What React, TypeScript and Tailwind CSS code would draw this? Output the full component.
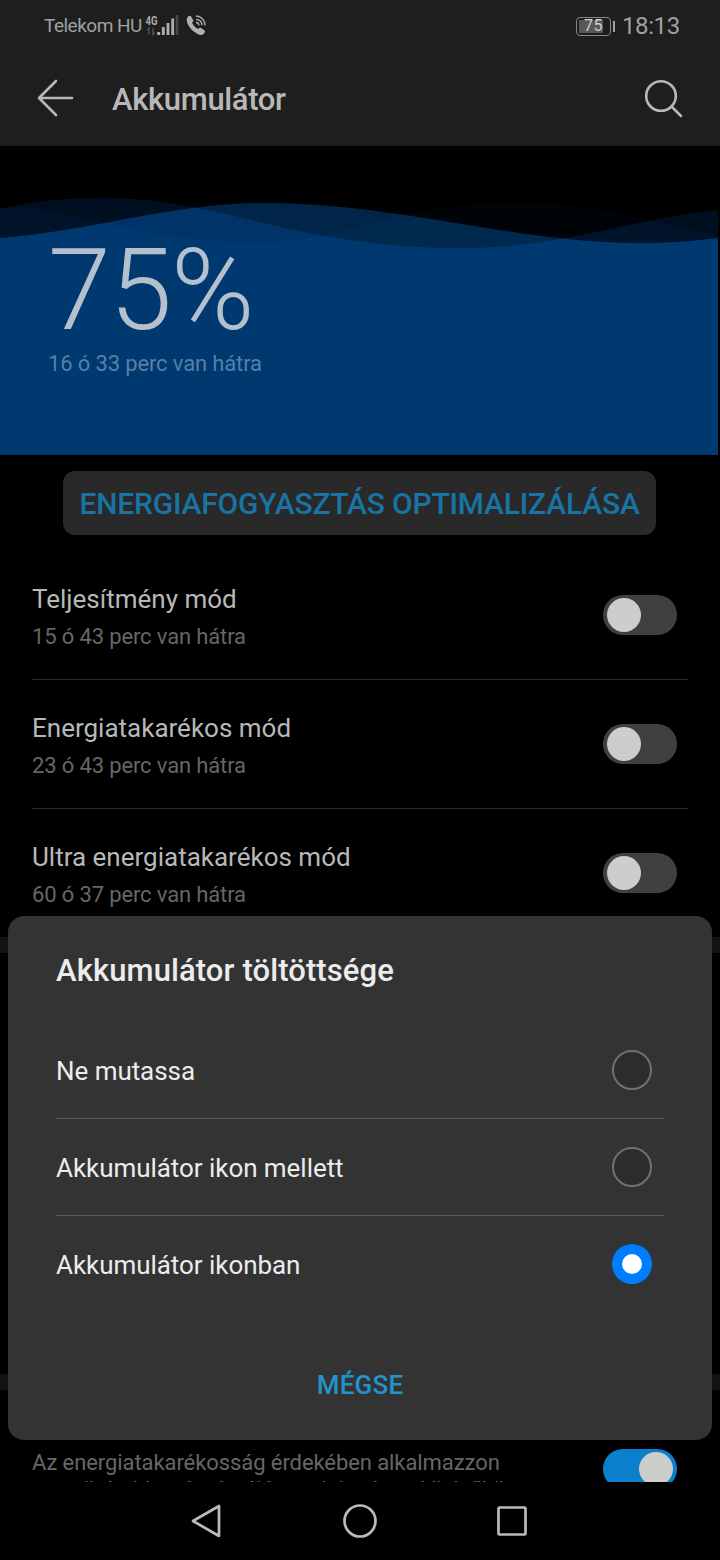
import { ReactNode } from 'react';

const MODES = [
  { title: 'Teljesítmény mód', left: '15 ó 43 perc van hátra' },
  { title: 'Energiatakarékos mód', left: '23 ó 43 perc van hátra' },
  { title: 'Ultra energiatakarékos mód', left: '60 ó 37 perc van hátra' },
];

const OPTIONS = ['Ne mutassa', 'Akkumulátor ikon mellett', 'Akkumulátor ikonban'];

function StatusBar() {
  return (
    <div className="flex h-[52px] items-center justify-between pl-11 pr-10 text-[#a0a0a0]">
      <div className="flex items-center">
        <span className="w-[98px] whitespace-nowrap text-[19px] tracking-[-0.5px]">Telekom HU</span>
        <svg width="36" height="26" viewBox="0 0 36 26" className="ml-[2px]">
          <text x="1.5" y="11.5" fontSize="13" fontWeight="700" textLength="12" lengthAdjust="spacingAndGlyphs" fill="#aaa">4G</text>
          <path d="M5 21.500v-6.500l-2 2M9 15v6.500l2-2" stroke="#505050" strokeWidth="1.5" fill="none" />
          <path d="M13.200 20.5h3" stroke="#b0b0b0" strokeWidth="3" />
          <path d="M19.300 22v-8M24 22v-12M28.700 22v-16.500" stroke="#b0b0b0" strokeWidth="2.800" />
          <path d="M33 22v-20" stroke="#484848" strokeWidth="2.500" />
        </svg>
        <svg width="22" height="22" viewBox="0 0 22 22" className="ml-[5px]">
          <path d="M2.500 2.200C4 .4 5.400.3 6.200 1.700L8 4.800c.6 1 .2 1.900-1 3 .9 2.500 3.400 5 6 6.200 1.200-1.200 2.100-1.500 3-.9l3.300 2.100c1.100.8.9 2-.8 3.700-1.900 1.800-5.400 1.300-10-2.600C3.500 12.200.2 5.300 2.500 2.200Z" fill="#b0b0b0" />
          <path d="M11 1c5 0 9 4 9 9.500M11 4.300c3.500 0 6 2.700 6 6M11 7.500c1.700 0 2.900 1.200 2.900 2.900" stroke="#b0b0b0" strokeWidth="1.300" fill="none" />
        </svg>
      </div>
      <div className="flex items-center">
        <div className="flex h-[19px] w-[35px] rounded-[4px] border border-[#858585] p-[2px]">
          <div className="flex h-full w-6 items-center bg-[#575757]">
            <span className="ml-[5px] text-[16px] leading-none tracking-[0.600px] text-[#d0d0d0]">75</span>
          </div>
        </div>
        <div className="ml-[2px] h-[11px] w-[2px] bg-[#a0a0a0]" />
        <span className="ml-[7px] w-[58px] whitespace-nowrap text-[24px] tracking-[-0.400px]">18:13</span>
      </div>
    </div>
  );
}

function TitleBar() {
  return (
    <div className="flex h-[94px] items-center pl-[37px] pr-9">
      <svg width="37" height="38" viewBox="0 0 37 38" className="-mt-[3px]" fill="none" stroke="#b8b8b8" strokeWidth="2.600" strokeLinecap="round" strokeLinejoin="round">
        <path d="M19 2L2 19l17 17M2 19h33" />
      </svg>
      <h1 className="ml-[38px] flex-1 pt-[2px] text-[31px] font-medium tracking-[-0.350px] text-[#b8b8b8]">Akkumulátor</h1>
      <svg width="40" height="40" viewBox="0 0 40 40" className="-mt-px" fill="none" stroke="#b8b8b8" strokeWidth="2.600" strokeLinecap="round">
        <circle cx="17" cy="17" r="14.800" />
        <path d="M28 28l9 9" />
      </svg>
    </div>
  );
}

// three translucent waves whose light adds up to the solid blue below
function Waves() {
  return (
    <svg width="718" height="309" viewBox="0 0 718 309" className="absolute left-0 top-0 isolate">
      <rect width="718" height="309" fill="#000" />
      <path className="mix-blend-plus-lighter" fill="#000408" d="M0 62C45 57 95 78 140 85C200 95 235 97 270 96C350 92 400 57 520 57C600 57 660 79 718 90V309H0Z" />
      <path className="mix-blend-plus-lighter" fill="#000f20" d="M0 63C35 54 80 51 115 52C225 55 300 102 460 102C565 102 630 73 718 64V309H0Z" />
      <path className="mix-blend-plus-lighter" fill="#002548" d="M0 92C95 85 170 57 265 57C400 57 520 98 640 97C670 97 695 95 718 92V309H0Z" />
    </svg>
  );
}

function Switch({ on = false }: { on?: boolean }) {
  return (
    <div className={`flex h-10 w-[74px] shrink-0 items-center rounded-full px-1 ${on ? 'justify-end bg-[#0a80cc]' : 'bg-[#404040]'}`}>
      <div className="size-[34px] rounded-full bg-[#cdcdcd]" />
    </div>
  );
}

function Row({ children, last }: { children: ReactNode; last: boolean }) {
  return (
    <div className={`mx-8 flex items-center justify-between pr-[11px] ${last ? 'h-32' : 'h-[129px] border-b border-[#2b2b2b]'}`}>
      {children}
    </div>
  );
}

function BatteryDialog() {
  return (
    <div className="absolute left-2 top-[916px] flex h-[524px] w-[704px] flex-col rounded-2xl bg-[#333] px-12">
      <h2 className="pt-[33px] text-[31px] font-medium leading-[44px] tracking-[0.100px] text-[#ececec]">Akkumulátor töltöttsége</h2>
      <div className="mt-[29px]">
        {OPTIONS.map((option, i) => (
          <div key={option} className={`flex items-center justify-between pr-3 ${i < 2 ? 'h-[97px] border-b border-[#5c5c5c]' : 'h-24'}`}>
            <span className="pt-[2px] text-[26px] tracking-[-0.050px] text-[#ececec]">{option}</span>
            {i === 2 ? (
              <span className="flex size-10 items-center justify-center rounded-full bg-[#007dff]">
                <span className="size-5 rounded-full bg-white" />
              </span>
            ) : (
              <span className="size-10 rounded-full border-2 border-[#707070] bg-[#2d2d2d]" />
            )}
          </div>
        ))}
      </div>
      <button className="mt-[53px] self-center text-[26px] font-medium leading-[40px] tracking-[0.200px] text-[#2492cb]">MÉGSE</button>
    </div>
  );
}

export default function App() {
  return (
    <div className="relative flex h-[1560px] w-[720px] flex-col overflow-hidden bg-black font-[Roboto,sans-serif]">
      <header className="h-[146px] shrink-0 bg-[#1e1e1e]">
        <StatusBar />
        <TitleBar />
      </header>

      <section className="relative h-[309px] shrink-0">
        <Waves />
        <div className="relative pl-12 pt-[86px]">
          <div className="text-[113px] font-light leading-[117px] tracking-[-1.200px] text-[#b5c0cd]">75%</div>
          <p className="text-[22px] leading-[30px] tracking-[-0.140px] text-[#5580a7]">16 ó 33 perc van hátra</p>
        </div>
      </section>

      <button className="ml-[63px] mt-4 h-16 w-[593px] shrink-0 whitespace-nowrap rounded-xl bg-[#292929] text-[30px] font-medium tracking-[-0.190px] text-[#1774a5]">
        ENERGIAFOGYASZTÁS OPTIMALIZÁLÁSA
      </button>

      <div className="mt-4 shrink-0">
        {MODES.map((mode, i) => (
          <Row key={mode.title} last={i === 2}>
            <div className="pt-[5px]">
              <div className="text-[26px] leading-9 text-[#b8b8b8]">{mode.title}</div>
              <div className="mt-[3px] text-[22px] leading-[34px] tracking-[-0.140px] text-[#666]">{mode.left}</div>
            </div>
            <Switch />
          </Row>
        ))}
      </div>
      <div className="h-4 shrink-0 bg-[#121212]" />
      <div className="mt-[421px] h-4 shrink-0 bg-[#121212]" />

      {/* second line runs under the navigation bar */}
      <div className="flex h-[92px] shrink-0 justify-between overflow-hidden pl-8 pr-[43px] pt-[57px]">
        <p className="w-[520px] whitespace-nowrap pt-[3px] text-[22px] leading-[26px] tracking-[-0.080px] text-[#666]">
          Az energiatakarékosság érdekében alkalmazzon
          <span className="block pt-px">egy sötétebb színsémájú megjelenést a kijelzőkön.</span>
        </p>
        <div className="pt-[2px]"><Switch on /></div>
      </div>

      <nav className="flex flex-1 items-center justify-center">
        <svg width="338" height="36" viewBox="0 0 338 36" fill="none" stroke="#bababa" strokeWidth="2.700" strokeLinejoin="round">
          <path d="M28 3v30L2 18Z" />
          <circle cx="169" cy="18" r="15.500" />
          <rect x="307.500" y="4.500" width="27" height="27" rx="1" />
        </svg>
      </nav>

      <BatteryDialog />
    </div>
  );
}
